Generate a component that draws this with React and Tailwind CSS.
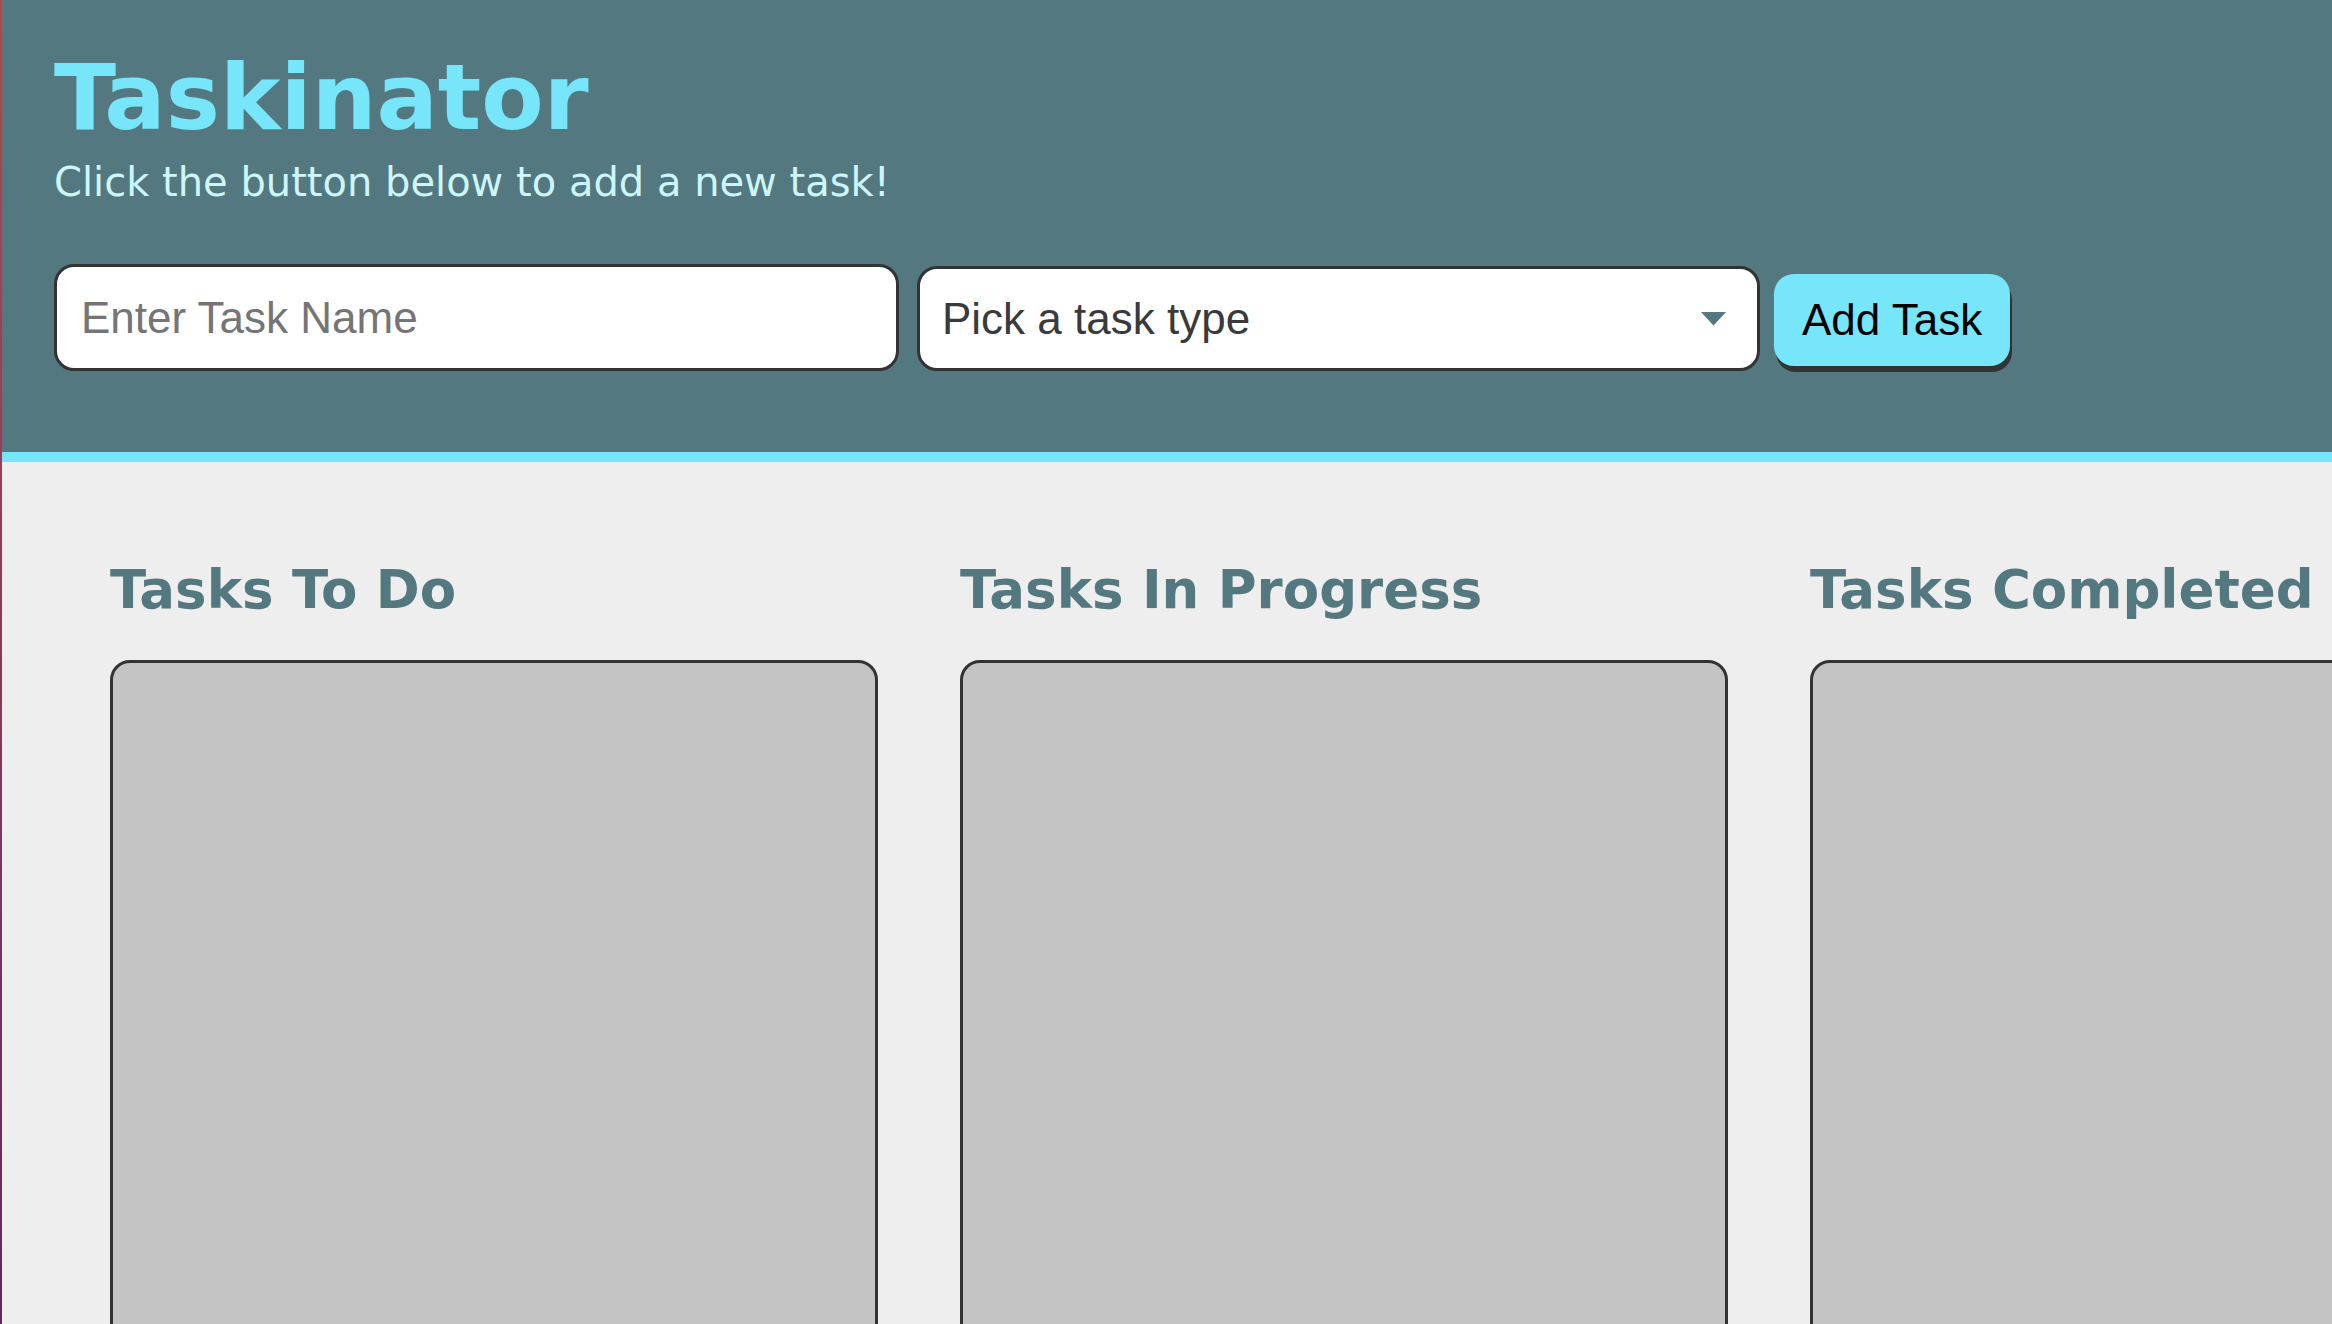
import React, { useState } from "react";

const columns = ["Tasks To Do", "Tasks In Progress", "Tasks Completed"];

function App() {
  const [taskName, setTaskName] = useState("");
  const [taskType, setTaskType] = useState("");

  return (
    <div className="flex h-screen w-full overflow-hidden bg-[#eeeeee]">
      {/* window edge */}
      <div className="w-[2px] shrink-0 bg-gradient-to-b from-[#c2404c] to-[#5e2a5e]" />

      <div className="flex min-w-0 flex-1 flex-col">
        {/* Header */}
        <header className="border-b-[10px] border-[#77e6fb] bg-[#53787f] pl-[52px] pt-[52px] pb-[81px]">
          <h1 className="text-[91px] font-bold leading-none text-[#77e6fb] [font-family:'DejaVu_Sans',sans-serif]">
            Taskinator
          </h1>
          <p className="mt-[19px] text-[40px] leading-none text-[#cdf6fb] [font-family:'DejaVu_Sans',sans-serif]">
            Click the button below to add a new task!
          </p>

          <form
            className="mt-[62px] flex items-end [font-family:'Liberation_Sans',Arial,sans-serif]"
            onSubmit={(e) => e.preventDefault()}
          >
            <input
              type="text"
              value={taskName}
              onChange={(e) => setTaskName(e.target.value)}
              placeholder="Enter Task Name"
              className="h-[107px] w-[845px] rounded-[20px] border-[3px] border-[#333333] bg-white px-[24px] text-[44px] text-[#333333] outline-none placeholder:text-[#757575]"
            />
            <div className="relative ml-[18px] h-[105px] w-[843px]">
              <select
                value={taskType}
                onChange={(e) => setTaskType(e.target.value)}
                className="h-full w-full appearance-none rounded-[20px] border-[3px] border-[#333333] bg-white px-[22px] text-[44px] text-[#3a3a3a] outline-none"
              >
                <option value="">Pick a task type</option>
                <option value="Web">Web</option>
                <option value="Mobile">Mobile</option>
                <option value="Print">Print</option>
              </select>
              <svg
                className="pointer-events-none absolute right-[33px] top-[45px]"
                width="27"
                height="15"
                viewBox="0 0 27 15"
              >
                <path d="M1 1 H26 L14 14 Q13.5 14.6 13 14 Z" fill="#53787f" />
              </svg>
            </div>
            <button
              type="submit"
              className="mb-[5px] ml-[14px] h-[92px] rounded-[20px] bg-[#77e6fb] px-[28px] text-[44px] text-black shadow-[2px_6px_0_#333333]"
            >
              Add Task
            </button>
          </form>
        </header>

        {/* Task lists */}
        <main className="flex gap-[82px] pl-[108px] pt-[98px]">
          {columns.map((title) => (
            <section key={title} className="w-[768px] shrink-0">
              <h2 className="text-[53px] font-bold leading-[60px] text-[#53787f] [font-family:'DejaVu_Sans',sans-serif]">
                {title}
              </h2>
              <ul className="mt-[40px] h-[720px] rounded-[20px] border-[3px] border-[#333333] bg-[#c4c4c4]" />
            </section>
          ))}
        </main>
      </div>
    </div>
  );
}

export default App;
